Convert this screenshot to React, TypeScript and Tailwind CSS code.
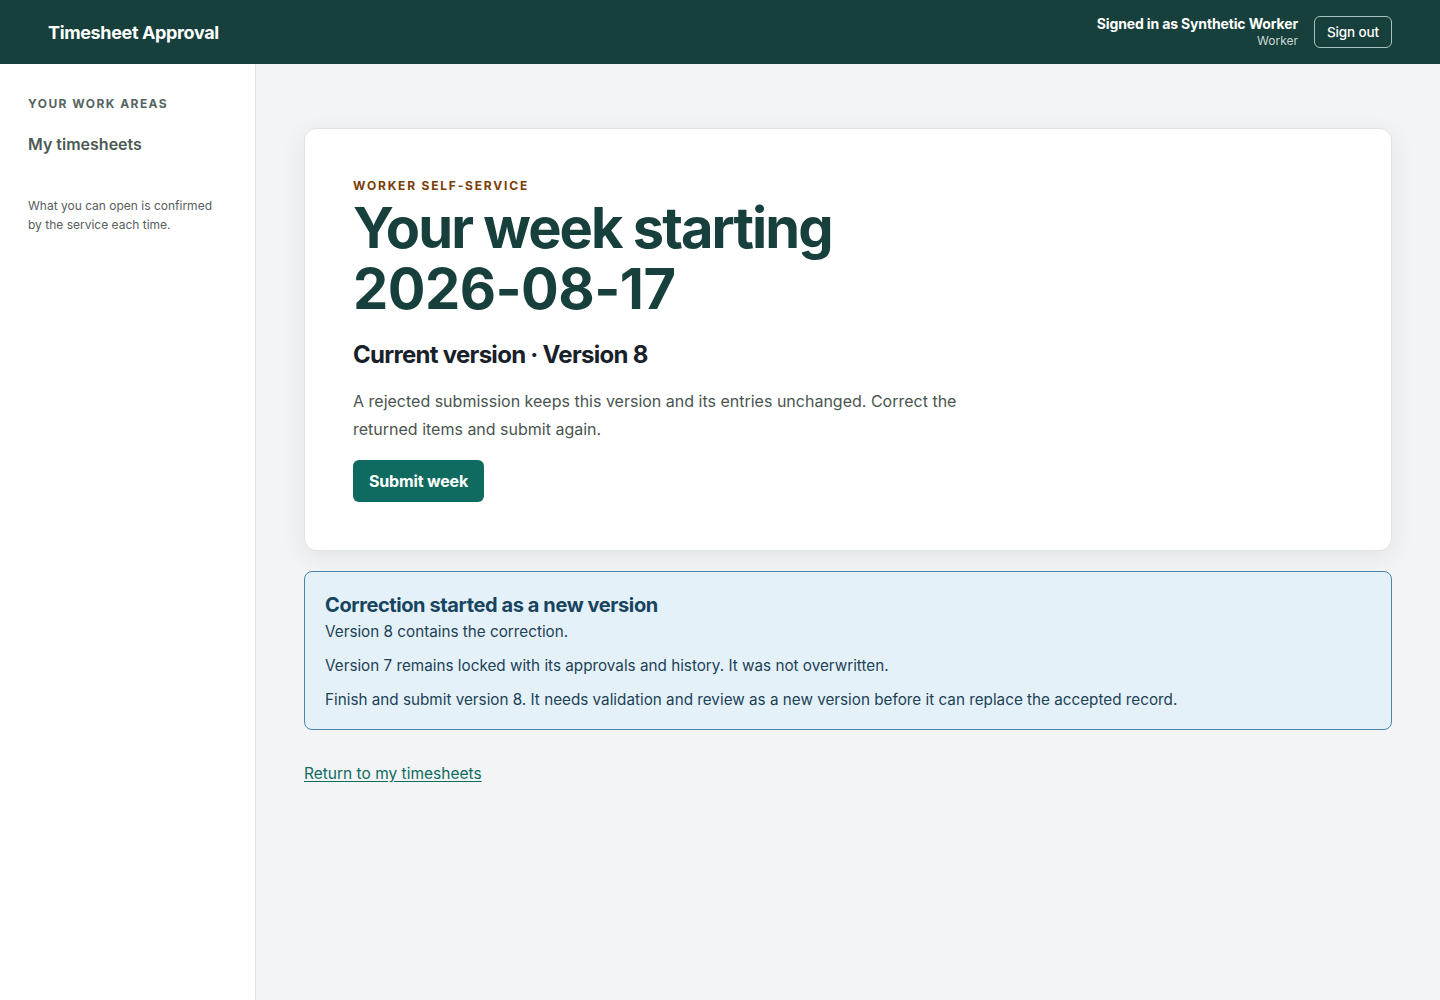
export default function App() {
  return (
    <div className="flex min-h-screen flex-col bg-[#f3f4f6] font-['Inter','Noto_Sans',sans-serif] text-[#1f2933]">
      <header className="flex h-16 items-center justify-between bg-[#173f3b] pl-12 pr-12 text-white">
        <div className="text-[18px] font-bold tracking-[-0.02em]">Timesheet Approval</div>
        <div className="flex items-center gap-4">
          <div className="flex flex-col items-end">
            <span className="text-[14px] font-bold leading-[17px] tracking-[-0.01em]">Signed in as Synthetic Worker</span>
            <span className="text-[12px] leading-[17px] text-[#c9d8d4]">Worker</span>
          </div>
          <button className="h-8 rounded-md border border-[#a9c2bd] px-3 text-[13.5px] font-medium tracking-[-0.01em] text-white">
            Sign out
          </button>
        </div>
      </header>
      <div className="flex flex-1">
        <aside className="w-64 shrink-0 border-r border-[#dfe3e3] bg-white px-7 pt-[33px]">
          <div className="text-[12px] font-bold uppercase leading-[14px] tracking-[0.12em] text-[#56655f]">Your work areas</div>
          <a className="mt-[21px] block text-[16px] font-semibold text-[#4c5a55]">My timesheets</a>
          <p className="mt-[40px] text-[12px] leading-[19px] text-[#56605c]">
            What you can open is confirmed by the service each time.
          </p>
        </aside>
        <main className="flex-1 px-12 pt-16">
          <section className="rounded-xl border border-[#dfe3e3] bg-white px-12 pb-12 pt-12 shadow-[0_6px_24px_rgba(15,40,35,0.08)]">
            <div className="text-[12px] font-bold uppercase tracking-[0.15em] text-[#7a3e06]">Worker self-service</div>
            <h1 className="mt-[3px] max-w-[640px] text-[56px] font-bold leading-[61px] tracking-[-0.035em] text-[#173f3b]">
              Your week starting <span className="tracking-[-0.01em]">2026-08-17</span>
            </h1>
            <h2 className="mt-[17px] text-[24px] font-bold tracking-[-0.03em] text-[#18202a]">
              Current version · Version 8
            </h2>
            <p className="mt-[14px] max-w-[620px] text-[16px] leading-[28px] text-[#4a5551]">
              A rejected submission keeps this version and its entries unchanged. Correct the returned items and submit again.
            </p>
            <button className="mt-[17px] h-[42px] rounded-md bg-[#0f6b5f] px-4 text-[16px] font-bold tracking-[-0.01em] text-white">
              Submit week
            </button>
          </section>
          <section className="mt-5 rounded-lg border border-[#4a86ad] bg-[#e5f1f8] px-5 pb-[17px] pt-[19px] text-[#1c4257]">
            <h3 className="text-[20px] font-bold leading-7 tracking-[-0.02em] text-[#17445f]">Correction started as a new version</h3>
            <p className="mt-[1px] text-[15.25px] leading-6">Version 8 contains the correction.</p>
            <p className="mt-[10px] text-[15.25px] leading-6">Version 7 remains locked with its approvals and history. It was not overwritten.</p>
            <p className="mt-[10px] text-[15.25px] leading-6">
              Finish and submit version 8. It needs validation and review as a new version before it can replace the accepted record.
            </p>
          </section>
          <a href="#" className="mt-8 inline-block text-[15.5px] leading-6 text-[#0f6b5f] underline underline-offset-2">
            Return to my timesheets
          </a>
        </main>
      </div>
    </div>
  );
}
